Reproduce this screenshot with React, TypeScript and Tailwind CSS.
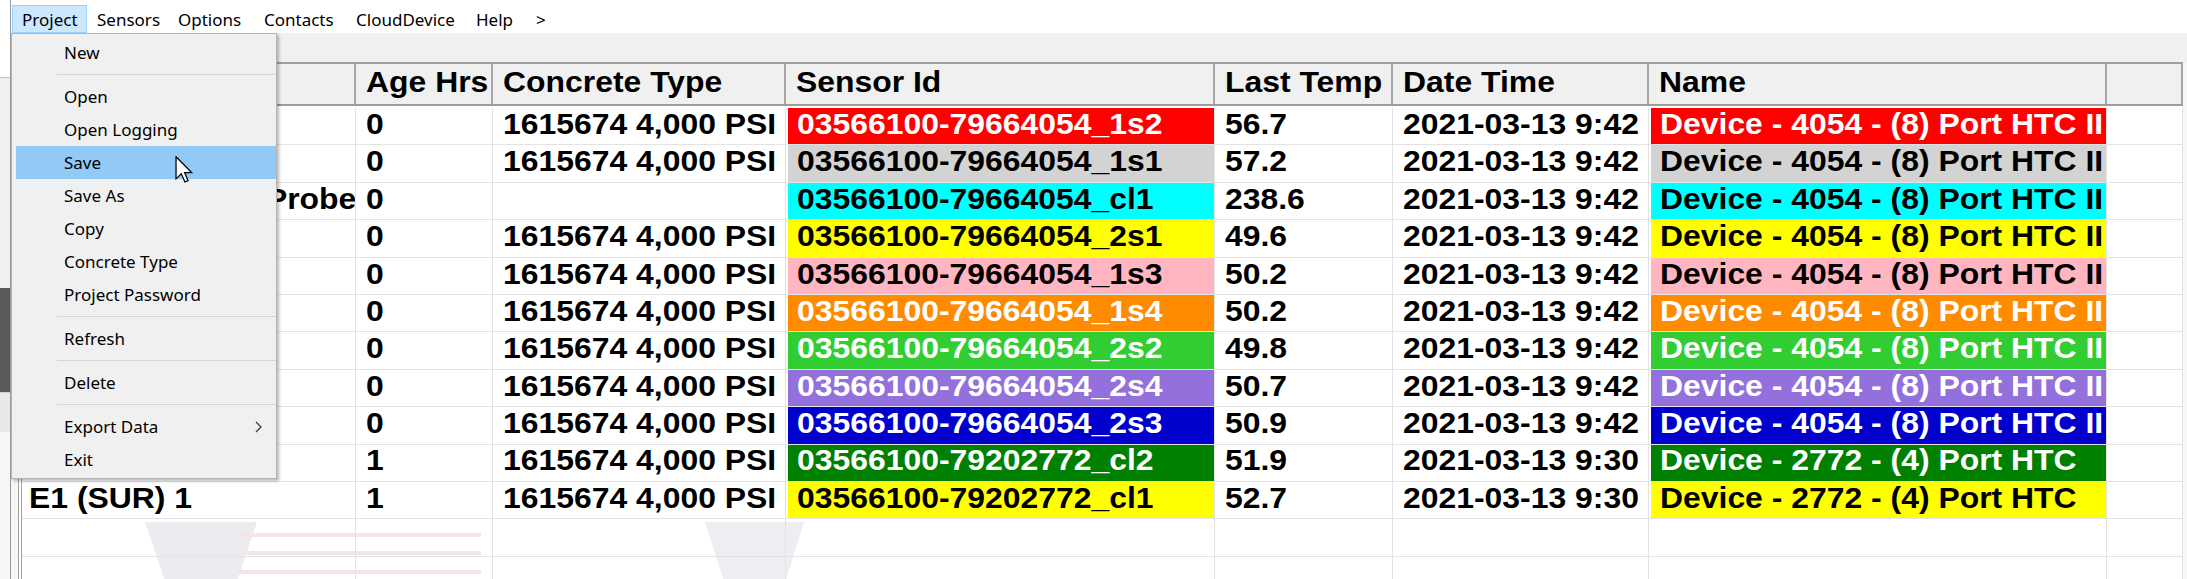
import React from 'react';

type Row = {
  name: string;
  age: string;
  concrete: string;
  sensor: string;
  temp: string;
  date: string;
  device: string;
  bg: string;
  fg: string;
};

const rows: Row[] = [
  { name: 'W1 (SUR) 1', age: '0', concrete: '1615674 4,000 PSI', sensor: '03566100-79664054_1s2', temp: '56.7', date: '2021-03-13 9:42', device: 'Device - 4054 - (8) Port HTC II', bg: 'bg-[#ff0000]', fg: 'text-white' },
  { name: 'W1 (MID) 1', age: '0', concrete: '1615674 4,000 PSI', sensor: '03566100-79664054_1s1', temp: '57.2', date: '2021-03-13 9:42', device: 'Device - 4054 - (8) Port HTC II', bg: 'bg-[#d3d3d3]', fg: 'text-black' },
  { name: 'Ambient Temp. Probe', age: '0', concrete: '', sensor: '03566100-79664054_cl1', temp: '238.6', date: '2021-03-13 9:42', device: 'Device - 4054 - (8) Port HTC II', bg: 'bg-[#00ffff]', fg: 'text-black' },
  { name: 'W1 (BOT) 1', age: '0', concrete: '1615674 4,000 PSI', sensor: '03566100-79664054_2s1', temp: '49.6', date: '2021-03-13 9:42', device: 'Device - 4054 - (8) Port HTC II', bg: 'bg-[#ffff00]', fg: 'text-black' },
  { name: 'W2 (SUR) 1', age: '0', concrete: '1615674 4,000 PSI', sensor: '03566100-79664054_1s3', temp: '50.2', date: '2021-03-13 9:42', device: 'Device - 4054 - (8) Port HTC II', bg: 'bg-[#ffb6c1]', fg: 'text-black' },
  { name: 'W2 (MID) 1', age: '0', concrete: '1615674 4,000 PSI', sensor: '03566100-79664054_1s4', temp: '50.2', date: '2021-03-13 9:42', device: 'Device - 4054 - (8) Port HTC II', bg: 'bg-[#ff8c00]', fg: 'text-white' },
  { name: 'W2 (BOT) 1', age: '0', concrete: '1615674 4,000 PSI', sensor: '03566100-79664054_2s2', temp: '49.8', date: '2021-03-13 9:42', device: 'Device - 4054 - (8) Port HTC II', bg: 'bg-[#32cd32]', fg: 'text-white' },
  { name: 'W3 (SUR) 1', age: '0', concrete: '1615674 4,000 PSI', sensor: '03566100-79664054_2s4', temp: '50.7', date: '2021-03-13 9:42', device: 'Device - 4054 - (8) Port HTC II', bg: 'bg-[#9370db]', fg: 'text-white' },
  { name: 'W3 (MID) 1', age: '0', concrete: '1615674 4,000 PSI', sensor: '03566100-79664054_2s3', temp: '50.9', date: '2021-03-13 9:42', device: 'Device - 4054 - (8) Port HTC II', bg: 'bg-[#0000cd]', fg: 'text-white' },
  { name: 'E1 (SUR) 2', age: '1', concrete: '1615674 4,000 PSI', sensor: '03566100-79202772_cl2', temp: '51.9', date: '2021-03-13 9:30', device: 'Device - 2772 - (4) Port HTC', bg: 'bg-[#008000]', fg: 'text-white' },
  { name: 'E1 (SUR) 1', age: '1', concrete: '1615674 4,000 PSI', sensor: '03566100-79202772_cl1', temp: '52.7', date: '2021-03-13 9:30', device: 'Device - 2772 - (4) Port HTC', bg: 'bg-[#ffff00]', fg: 'text-black' },
];

const GRID = 'grid grid-cols-[334px_137px_293px_429px_178px_256px_458px_76px]';

function T({ children }: { children: React.ReactNode }) {
  return <span className="inline-block whitespace-nowrap scale-x-[1.1] origin-left">{children}</span>;
}

function PlainCell({ children, first }: { children?: React.ReactNode; first?: boolean }) {
  return (
    <div className={`flex items-center overflow-hidden border-r border-b border-[#e3e3e3] pb-[3px] ${first ? 'pl-[7px]' : 'pl-[10px]'}`}>
      <T>{children}</T>
    </div>
  );
}

function ColorCell({ children, bg, fg }: { children: React.ReactNode; bg: string; fg: string }) {
  return (
    <div className="flex overflow-hidden border-r border-b border-[#e3e3e3] pl-[2px]">
      <div className={`flex-1 flex items-center pl-[9px] pb-[3px] overflow-hidden ${bg} ${fg}`}>
        <T>{children}</T>
      </div>
    </div>
  );
}

function HeadCell({ children, first }: { children?: React.ReactNode; first?: boolean }) {
  return (
    <div className={`flex items-center overflow-hidden border-r-2 border-[#a6a6a6] pb-[2px] ${first ? 'pl-[7px]' : 'pl-[10px]'}`}>
      <T>{children}</T>
    </div>
  );
}

function MenuItem({ label, active, arrow }: { label: string; active?: boolean; arrow?: boolean }) {
  return (
    <div className={`relative ml-[4px] h-[33px] flex items-center pl-[48px] ${active ? 'bg-[#91c9f7]' : ''}`}>
      <span>{label}</span>
      {arrow && (
        <svg className="ml-auto mr-[14px]" width="7" height="12" viewBox="0 0 7 12">
          <polyline points="1,1 6,6 1,11" fill="none" stroke="#333" strokeWidth="1.2" />
        </svg>
      )}
    </div>
  );
}

function Sep() {
  return (
    <div className="h-[11px] flex items-center ml-[45px]">
      <div className="h-px w-full bg-[#d5d5d5]" />
    </div>
  );
}

export default function App() {
  const menuBar = [
    { label: 'Project', w: 'w-[75px]', active: true },
    { label: 'Sensors', w: 'w-[81px]' },
    { label: 'Options', w: 'w-[86px]' },
    { label: 'Contacts', w: 'w-[92px]' },
    { label: 'CloudDevice', w: 'w-[120px]' },
    { label: 'Help', w: 'w-[60px]' },
    { label: '>', w: 'w-[30px]' },
  ];

  return (
    <div className="relative w-[2187px] h-[579px] overflow-hidden bg-white flex font-['Liberation_Sans',Arial,sans-serif]">
      {/* sliver of the window behind */}
      <div className="w-[10px] flex flex-col shrink-0">
        <div className="h-[78px] bg-white border-b border-[#bdbdbd]" />
        <div className="h-[210px] bg-[#f0f0f0]" />
        <div className="h-[104px] bg-[#595959]" />
        <div className="h-[40px] bg-[#e9e9e9] border-t border-[#cfcfcf]" />
        <div className="flex-1 bg-[#f7f7f7]" />
      </div>

      {/* application window */}
      <div className="flex-1 flex flex-col border-l border-[#9a9a9a] min-w-0">
        {/* menu bar */}
        <div className="h-[33px] shrink-0 bg-white flex items-start pl-px font-['Noto_Sans',sans-serif] text-[17px] text-black">
          {menuBar.map((m) => (
            <div
              key={m.label}
              className={`mt-[5px] h-[28px] ${m.w} pl-[9px] pt-[2px] flex items-center border ${m.active ? 'bg-[#cce8ff] border-[#99d1ff]' : 'border-transparent'}`}
            >
              {m.label}
            </div>
          ))}
        </div>

        {/* toolbar band */}
        <div className="h-[29px] shrink-0 bg-[#f0f0f0]" />

        {/* grid area */}
        <div className="flex-1 bg-[#f6f6f6] pl-[7px] pr-[4px] min-h-0">
          <div className="h-full border-l border-t-2 border-[#a0a0a0] bg-white pl-[2px]">
            <div className="h-full border-l border-[#a0a0a0] text-[29px] font-bold text-black">
              {/* header */}
              <div className={`${GRID} h-[42px] bg-[#f0f0f0] border-b-2 border-[#9c9c9c]`}>
                <HeadCell first>Location</HeadCell>
                <HeadCell>Age Hrs</HeadCell>
                <HeadCell>Concrete Type</HeadCell>
                <HeadCell>Sensor Id</HeadCell>
                <HeadCell>Last Temp</HeadCell>
                <HeadCell>Date Time</HeadCell>
                <HeadCell>Name</HeadCell>
                <HeadCell />
              </div>
              <div className="h-[2px]" />

              {/* rows */}
              {rows.map((r, i) => (
                <div key={i} className={`${GRID} h-[37.4px] bg-white`}>
                  <PlainCell first>{r.name}</PlainCell>
                  <PlainCell>{r.age}</PlainCell>
                  <PlainCell>{r.concrete}</PlainCell>
                  <ColorCell bg={r.bg} fg={r.fg}>{r.sensor}</ColorCell>
                  <PlainCell>{r.temp}</PlainCell>
                  <PlainCell>{r.date}</PlainCell>
                  <ColorCell bg={r.bg} fg={r.fg}>{r.device}</ColorCell>
                  <PlainCell />
                </div>
              ))}

              {/* empty rows with faint watermark */}
              <div className="relative">
                <svg className="absolute left-0 top-0" width="900" height="75" viewBox="0 0 900 75">
                  <polygon points="123,3 235,3 179,170" fill="#ececf0" />
                  <rect x="215" y="14" width="244" height="4" fill="#f3e6e6" />
                  <rect x="215" y="32" width="244" height="4" fill="#f3e6e6" />
                  <rect x="215" y="51" width="244" height="4" fill="#f3e6e6" />
                  <polygon points="683,3 782,3 733,160" fill="#eeeef2" />
                </svg>
                {[0, 1].map((k) => (
                  <div key={k} className={`${GRID} h-[37.4px] relative`}>
                    {[0, 1, 2, 3, 4, 5, 6, 7].map((c) => (
                      <div key={c} className="border-r border-b border-[#e3e3e3]" />
                    ))}
                  </div>
                ))}
              </div>
            </div>
          </div>
        </div>
      </div>

      {/* dropdown menu */}
      <div className="absolute left-[11px] top-[33px] w-[266px] h-[446px] bg-[#f0f0f0] border border-[#b4b4b4] shadow-[2px_2px_3px_rgba(0,0,0,0.28)] pt-[2px] font-['Noto_Sans',sans-serif] text-[17px] text-black">
        <MenuItem label="New" />
        <Sep />
        <MenuItem label="Open" />
        <MenuItem label="Open Logging" />
        <MenuItem label="Save" active />
        <MenuItem label="Save As" />
        <MenuItem label="Copy" />
        <MenuItem label="Concrete Type" />
        <MenuItem label="Project Password" />
        <Sep />
        <MenuItem label="Refresh" />
        <Sep />
        <MenuItem label="Delete" />
        <Sep />
        <MenuItem label="Export Data" arrow />
        <MenuItem label="Exit" />
      </div>

      {/* mouse cursor */}
      <svg className="absolute left-[175px] top-[156px]" width="18" height="27" viewBox="0 0 12.5 19.5">
        <path d="M0.5,0.5 L0.5,16.5 L4.3,12.8 L6.9,18.8 L9.2,17.8 L6.7,12 L11.8,12 Z" fill="#ffffff" stroke="#000000" strokeWidth="0.9" strokeLinejoin="miter" />
      </svg>
    </div>
  );
}
